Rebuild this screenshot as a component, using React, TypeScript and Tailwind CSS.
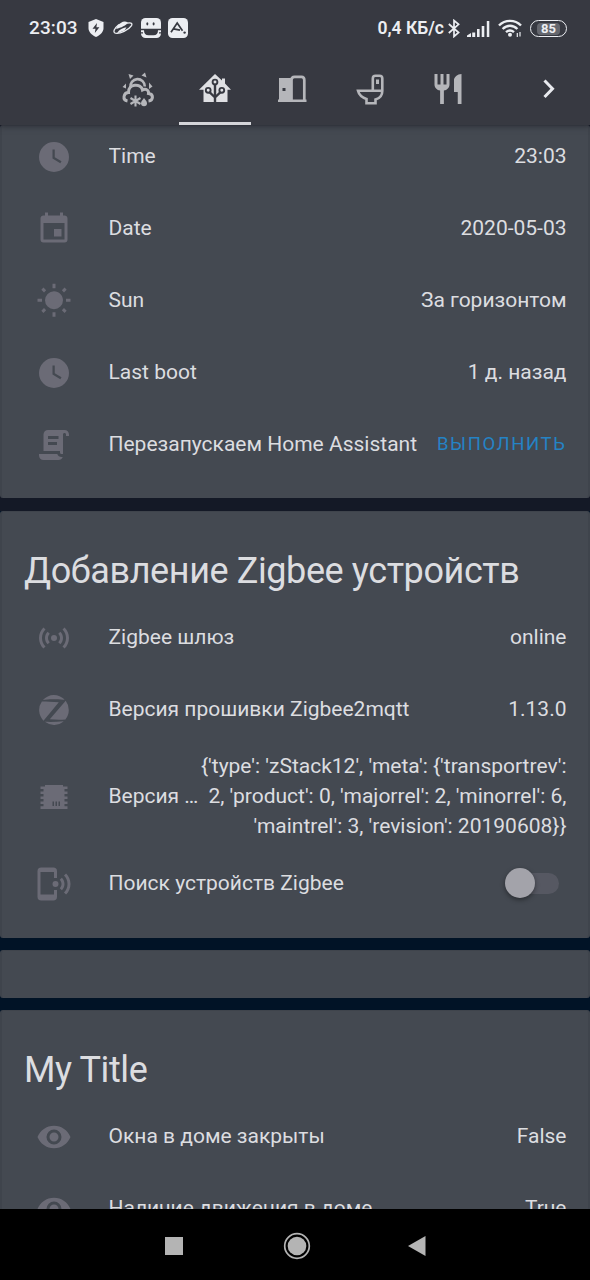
import type { ReactNode } from 'react'

const icons = {
  clock: 'M12,2A10,10 0 0,0 2,12A10,10 0 0,0 12,22A10,10 0 0,0 22,12A10,10 0 0,0 12,2M16.2,16.2L11,13V7H12.5V12.2L17,14.9L16.2,16.2Z',
  calendar: 'M19,19H5V8H19M16,1V3H8V1H6V3H5C3.89,3 3,3.89 3,5V19A2,2 0 0,0 5,21H19A2,2 0 0,0 21,19V5C21,3.89 20.1,3 19,3H18V1M17,12H12V17H17V12Z',
  sun: 'M3.55,18.54L4.96,19.95L6.76,18.16L5.34,16.74M11,22.45C11.32,22.45 13,22.45 13,22.45V19.5H11M12,5.5A6,6 0 0,0 6,11.5A6,6 0 0,0 12,17.5A6,6 0 0,0 18,11.5C18,8.18 15.31,5.5 12,5.5M20,12.5H23V10.5H20M17.24,18.16L19.04,19.95L20.45,18.54L18.66,16.74M20.45,4.46L19.04,3.05L17.24,4.84L18.66,6.26M13,0.55H11V3.5H13M4,10.5H1V12.5H4M6.76,4.84L4.96,3.05L3.55,4.46L5.34,6.26L6.76,4.84Z',
  script: 'M17.8,20C17.4,21.2 16.3,22 15,22H5C3.3,22 2,20.7 2,19V18H5L14.2,18C14.6,19.2 15.7,20 17,20H17.8M19,2C20.7,2 22,3.3 22,5V6H20V5C20,4.4 19.6,4 19,4C18.4,4 18,4.4 18,5V18H17C16.4,18 16,17.6 16,17V16H5V5C5,3.3 6.3,2 8,2H19M8,6V8H15V6H8M8,10V12H14V10H8Z',
  accessPoint: 'M4.93,4.93C3.12,6.74 2,9.24 2,12C2,14.76 3.12,17.26 4.93,19.07L6.34,17.66C4.89,16.22 4,14.22 4,12C4,9.79 4.89,7.78 6.34,6.34L4.93,4.93M19.07,4.93L17.66,6.34C19.11,7.79 20,9.79 20,12C20,14.22 19.11,16.22 17.66,17.66L19.07,19.07C20.88,17.26 22,14.76 22,12C22,9.24 20.88,6.74 19.07,4.93M7.76,7.76C6.67,8.85 6,10.35 6,12C6,13.65 6.67,15.15 7.76,16.24L9.17,14.83C8.45,14.11 8,13.11 8,12C8,10.89 8.45,9.89 9.17,9.17L7.76,7.76M16.24,7.76L14.83,9.17C15.55,9.89 16,10.89 16,12C16,13.11 15.55,14.11 14.83,14.83L16.24,16.24C17.33,15.15 18,13.65 18,12C18,10.35 17.33,8.85 16.24,7.76M12,10A2,2 0 0,0 10,12A2,2 0 0,0 12,14A2,2 0 0,0 14,12A2,2 0 0,0 12,10Z',
  zigbee: 'M19.1,5A10,10 0 0,0 4.6,5.3C8,4.6 14,4.7 18.2,5.2L19.1,5M3.9,6.3A10,10 0 0,0 5,19.1L15.2,6.9C11,6.4 7,6.3 3.9,6.3M19.8,5.9L9.2,18.2C13,18.5 17,18.5 19.6,18.3A10,10 0 0,0 19.8,5.9M5.9,19.9A10,10 0 0,0 18.5,19.5C14,20 9.5,20 5.9,19.9Z',
  chip: 'M6,4H18V5H21V6.7H19V8.3H21V10H19V11.6H21V13.3H19V15H21V16.6H19V18.2H21V20H3V18.2H5V16.6H3V15H5V13.3H3V11.6H5V10H3V8.3H5V6.7H3V5H6V4M11,15V18H12V15H11M13,15V18H14V15H13M15,15V18H16V15H15Z',
  cellphone: 'M20.07,4.93C21.88,6.74 23,9.24 23,12C23,14.76 21.88,17.26 20.07,19.07L18.66,17.66C20.11,16.22 21,14.22 21,12C21,9.79 20.11,7.78 18.66,6.34L20.07,4.93M17.24,7.76C18.33,8.85 19,10.35 19,12C19,13.65 18.33,15.15 17.24,16.24L15.83,14.83C16.55,14.11 17,13.11 17,12C17,10.89 16.55,9.89 15.83,9.17L17.24,7.76M13,10A2,2 0 0,1 15,12A2,2 0 0,1 13,14A2,2 0 0,1 11,12A2,2 0 0,1 13,10M11.5,1A2.5,2.5 0 0,1 14,3.5V8H12V4H3V19H12V16H14V20.5A2.5,2.5 0 0,1 11.5,23H3.5A2.5,2.5 0 0,1 1,20.5V3.5A2.5,2.5 0 0,1 3.5,1H11.5Z',
  eye: 'M12,9A3,3 0 0,0 9,12A3,3 0 0,0 12,15A3,3 0 0,0 15,12A3,3 0 0,0 12,9M12,17A5,5 0 0,1 7,12A5,5 0 0,1 12,7A5,5 0 0,1 17,12A5,5 0 0,1 12,17M12,4.5C7,4.5 2.73,7.61 1,12C2.73,16.39 7,19.5 12,19.5C17,19.5 21.27,16.39 23,12C21.27,7.61 17,4.5 12,4.5Z',
  silverware: 'M11,9H9V2H7V9H5V2H3V9C3,11.12 4.66,12.84 6.75,12.97V22H9.25V12.97C11.34,12.84 13,11.12 13,9V2H11V9M16,6V14H18.5V22H21V2C18.24,2 16,4.24 16,6Z',
}

function MdiIcon({ path }: { path: string }) {
  return (
    <svg viewBox="0 0 24 24" className="h-9 w-9 shrink-0" fill="currentColor">
      <path d={path} />
    </svg>
  )
}

function Row({ icon, label, children }: { icon: string; label: string; children: ReactNode }) {
  return (
    <div className="flex min-h-[60px] items-center">
      <div className="mr-[36.5px] ml-3 pt-[2px] text-[#6b6b76]">
        <MdiIcon path={icon} />
      </div>
      <div className="min-w-[90px] flex-1 truncate leading-[30px]">{label}</div>
      <div className="ml-px text-right leading-[30px]">{children}</div>
    </div>
  )
}

function Card({ title, children, className = '' }: { title?: string; children?: ReactNode; className?: string }) {
  return (
    <section className={`rounded-[3px] border-x-2 border-t border-[#3f444c] bg-[#444951] pr-[21.5px] pl-[22px] ${className}`}>
      {title && <h2 className="h-[95px] pt-[37px] text-[36px] leading-[44px] tracking-[-0.4px]">{title}</h2>}
      <div className="flex flex-col gap-3">{children}</div>
    </section>
  )
}

function StatusBar() {
  return (
    <div className="flex h-[57px] items-center pr-[23px] pl-[29px] text-[#eceef2]">
      <span className="w-[49px] text-[19px] font-medium tracking-[0.1px]">23:03</span>
      <svg width="16" height="18" viewBox="0 0 16 18" className="-mt-0.5 ml-[10px]">
        <path d="M8 0L15.5 3V9C15.5 13 12.5 16 8 18C3.5 16 .5 13 .5 9V3Z" fill="currentColor" />
        <path d="M9 4L4.5 9.7H7.5L6.8 14L11.4 8.2H8.4Z" fill="#373941" />
      </svg>
      <svg width="20" height="16" viewBox="0 0 20 16" className="-mt-0.5 ml-[9px]" fill="none" stroke="currentColor">
        <path d="M4.5 6C8 1.5 12 .3 15 2.8C13.5 5 8 8 3 9Z" fill="currentColor" stroke="none" />
        <path d="M6 4.5C1 8.5-.5 12.5 2.5 13.2C7 14 15.5 10.2 18.5 5.6C20 2.8 17 2.5 14 3.2" strokeWidth="1.3" />
        <path d="M4 13.5C5.5 10 10 7.5 13.5 7.5L11.5 10.5Z" fill="currentColor" stroke="none" />
      </svg>
      <svg width="20" height="20" viewBox="0 0 20 20" className="-mt-px ml-2">
        <rect width="20" height="20" rx="4.5" fill="currentColor" />
        <path d="M0 10.8H20V12.2H17C17 15.5 15.5 17.3 12.5 17.3H7.5C4.5 17.3 3 15.5 3 12.2H0Z" fill="#373941" />
        <path d="M0 14.2H2V15.6H0ZM18 14.2H20V15.6H18Z" fill="#373941" />
        <ellipse cx="6.3" cy="5.8" rx="1" ry="1.6" fill="#373941" />
        <ellipse cx="12.6" cy="5.8" rx="1" ry="1.6" fill="#373941" />
      </svg>
      <svg width="20" height="20" viewBox="0 0 20 20" className="-mt-px ml-[7px]">
        <rect width="20" height="20" rx="4.5" fill="currentColor" />
        <path d="M3 14.2L9.2 5L14.5 12.8M5.5 10.8L12 12.2" fill="none" stroke="#373941" strokeWidth="1.7" />
        <circle cx="16.6" cy="14.6" r="1.2" fill="#373941" />
      </svg>
      <span className="ml-auto text-[17.5px] font-semibold whitespace-nowrap">0,4 КБ/с</span>
      <svg width="12" height="19" viewBox="0 0 12 19" className="ml-1" fill="none" stroke="currentColor" strokeWidth="1.7">
        <path d="M.8 5L10.6 13.5L6 17.5V1.5L10.6 5.3L.8 14" />
      </svg>
      <svg width="23" height="16" viewBox="0 0 23 16" className="ml-[7px]" fill="currentColor">
        <path d="M0 16V14.5L4 12V16ZM5.2 11.5H8.2V16H5.2ZM10 8H12.6V16H10ZM14.7 5H17.3V16H14.7ZM19.8 0H22.3V16H19.8Z" />
      </svg>
      <svg width="24" height="19" viewBox="0 0 24 19" className="ml-2" fill="none" stroke="currentColor" strokeWidth="2.4">
        <path d="M1 6.5C7 .3 17 .3 23 6.5M4.6 10C9 5.7 15 5.7 19.4 10M8 13.2C10.5 11 13.5 11 16 13.2" />
        <circle cx="12" cy="15.8" r="2" fill="currentColor" stroke="none" />
        <path d="M19.3 14V18M22 13V17.5" strokeWidth="1.2" />
      </svg>
      <div className="ml-2 flex h-[17px] w-[37px] items-center rounded-full border-[1.5px] border-current px-[6px]">
        <div className="flex h-[12px] w-full items-center justify-center rounded-sm bg-[#65676e] text-[13px] font-bold">85</div>
      </div>
    </div>
  )
}

function WeatherIcon() {
  return (
    <svg width="36" height="36" viewBox="0 0 36 36" fill="none" stroke="currentColor" strokeWidth="2.6">
      <path d="M10.5 15.5A7.2 7.2 0 1 1 24.8 14.5" />
      <path d="M7.5 29C2 28 3.5 20.5 8.5 20.5C8 11.5 21 11 22.5 18C26 16 29 18.5 28.5 21.5C34 22 33.5 28.5 28.5 29" strokeWidth="3" />
      <path d="M15.5 23.5V34.5M10.5 26L20.5 32M20.5 26L10.5 32" strokeWidth="2.1" />
      <path d="M24 26C21.5 29 21 30.2 21 31.2A3 3 0 0 0 27 31.2C27 30.2 26.5 29 24 26Z" fill="currentColor" stroke="none" />
      <path d="M8.5 2L13.5 3.5L10 7ZM25 .5L26.5 5.5L21.5 3.5ZM6 11.5V16.5L2.5 15ZM29 10.5L32.5 14.5L29 17Z" fill="currentColor" stroke="none" />
    </svg>
  )
}

function HomeAssistantIcon() {
  return (
    <svg width="36" height="36" viewBox="0 0 36 36">
      <path d="M18 3L25 9.5V7.5H28V12.5L34 18.8H30.5V31H6.5V18.8H2Z" fill="currentColor" />
      <g fill="none" stroke="#373941" strokeWidth="1.9">
        <path d="M18 13.5V31M17.5 26L12.5 21.2M18.5 26L23.5 21.2" strokeWidth="2.4" />
        <circle cx="18" cy="11" r="2.4" />
        <circle cx="11.2" cy="19.3" r="2.4" />
        <circle cx="24.8" cy="19.3" r="2.4" />
      </g>
    </svg>
  )
}

function DoorIcon() {
  return (
    <svg width="36" height="36" viewBox="0 0 36 36">
      <path d="M4 7H16V28.5H31.5V31H3V28.5H4Z" fill="currentColor" />
      <path d="M16.5 30V9Q16.5 5.8 19.5 5.8H26.5Q29.3 5.8 29.3 9V30" fill="none" stroke="currentColor" strokeWidth="2.7" />
      <rect x="7.5" y="17" width="3" height="3" fill="#373941" />
    </svg>
  )
}

function ToiletIcon() {
  return (
    <svg width="36" height="36" viewBox="0 0 36 36" fill="none" stroke="currentColor" strokeWidth="2.6">
      <path d="M19.8 19V7.5Q19.8 4.8 22.5 4.8H26.5Q29.3 4.8 29.3 7.5V20C29.3 25 26 27.5 22.5 28.5V32.2H13.5V28C9 26.5 6 24 5 19.8H29" />
      <path d="M24.5 8.5V13" strokeWidth="3" />
    </svg>
  )
}

function Tabs() {
  return (
    <nav className="flex h-[68px] items-stretch pl-[99px] text-[#b5b6ba]">
      <div className="flex w-[77.5px] justify-center pt-[15px]"><WeatherIcon /></div>
      <div className="flex w-[77.5px] justify-center pt-[14px] text-[#dfe0e3]">
        <div className="flex w-[72px] justify-center border-b-[3px] border-[#d4d5d9]"><HomeAssistantIcon /></div>
      </div>
      <div className="flex w-[78px] justify-center pt-[14px]"><DoorIcon /></div>
      <div className="flex w-[77.5px] justify-center pt-[14px]"><ToiletIcon /></div>
      <div className="flex w-[77px] justify-center pt-[14px]"><MdiIcon path={icons.silverware} /></div>
      <svg width="12" height="20" viewBox="0 0 12 20" className="mt-[22px] ml-[56px]" fill="none" stroke="#e8eaee" strokeWidth="3">
        <path d="M1.5 1.5L9.5 9.7L1.5 18" />
      </svg>
    </nav>
  )
}

export default function App() {
  return (
    <div className="flex h-[1280px] w-[590px] flex-col overflow-hidden bg-[#011326] font-['Roboto',sans-serif] text-[21px] text-[#dcdde0]">
      <header className="relative z-10 h-[125px] shrink-0 bg-[#373941] shadow-[0_1px_6px_rgba(30,32,40,0.7)]">
        <StatusBar />
        <Tabs />
      </header>

      <main className="min-h-0 flex-1 overflow-hidden">
        <div className="bg-[#141926] pb-[13px]">
          <Card className="h-[373px]">
            <Row icon={icons.clock} label="Time">23:03</Row>
            <Row icon={icons.calendar} label="Date">2020-05-03</Row>
            <Row icon={icons.sun} label="Sun">За горизонтом</Row>
            <Row icon={icons.clock} label="Last boot">1 д. назад</Row>
            <Row icon={icons.script} label="Перезапускаем Home Assistant">
              <button className="block text-[18.5px] text-[#2583c5] uppercase tracking-[1.6px]">Выполнить</button>
            </Row>
          </Card>
        </div>

        <div className="flex flex-col gap-[12.5px]">
          <Card title="Добавление Zigbee устройств" className="h-[426.5px]">
            <Row icon={icons.accessPoint} label="Zigbee шлюз">online</Row>
            <Row icon={icons.zigbee} label="Версия прошивки Zigbee2mqtt">1.13.0</Row>
            <Row icon={icons.chip} label="Версия координатора">
              {"{'type': 'zStack12', 'meta': {'transportrev': 2, 'product': 0, 'majorrel': 2, 'minorrel': 6, 'maintrel': 3, 'revision': 20190608}}"}
            </Row>
            <Row icon={icons.cellphone} label="Поиск устройств Zigbee">
              <div className="mr-[7.5px] flex h-[30px] w-[54.5px] items-center">
                <div className="z-10 h-[30px] w-[30px] shrink-0 rounded-full bg-[#a3a3aa] shadow-[0_2px_5px_rgba(0,0,0,0.4)]" />
                <div className="-ml-[15px] h-[21px] flex-1 rounded-r-full bg-[#565862]" />
              </div>
            </Row>
          </Card>
          <Card className="h-[47.5px]" />
          <Card title="My Title">
            <Row icon={icons.eye} label="Окна в доме закрыты">False</Row>
            <Row icon={icons.eye} label="Наличие движения в доме">True</Row>
          </Card>
        </div>
      </main>

      <footer className="flex h-[71px] shrink-0 items-center bg-black pl-[165px] text-[#b4b4b4]">
        <div className="mt-[3px] h-[18px] w-[18px] bg-current" />
        <svg width="28" height="28" viewBox="0 0 28 28" className="mt-[3px] ml-[100px]">
          <circle cx="14" cy="14" r="12.3" fill="none" stroke="currentColor" strokeWidth="1.7" />
          <circle cx="14" cy="14" r="9.3" fill="currentColor" />
        </svg>
        <svg width="18" height="20" viewBox="0 0 18 20" className="mt-[3px] ml-[97px]">
          <path d="M0 10L17.5 0V20Z" fill="currentColor" />
        </svg>
      </footer>
    </div>
  )
}
